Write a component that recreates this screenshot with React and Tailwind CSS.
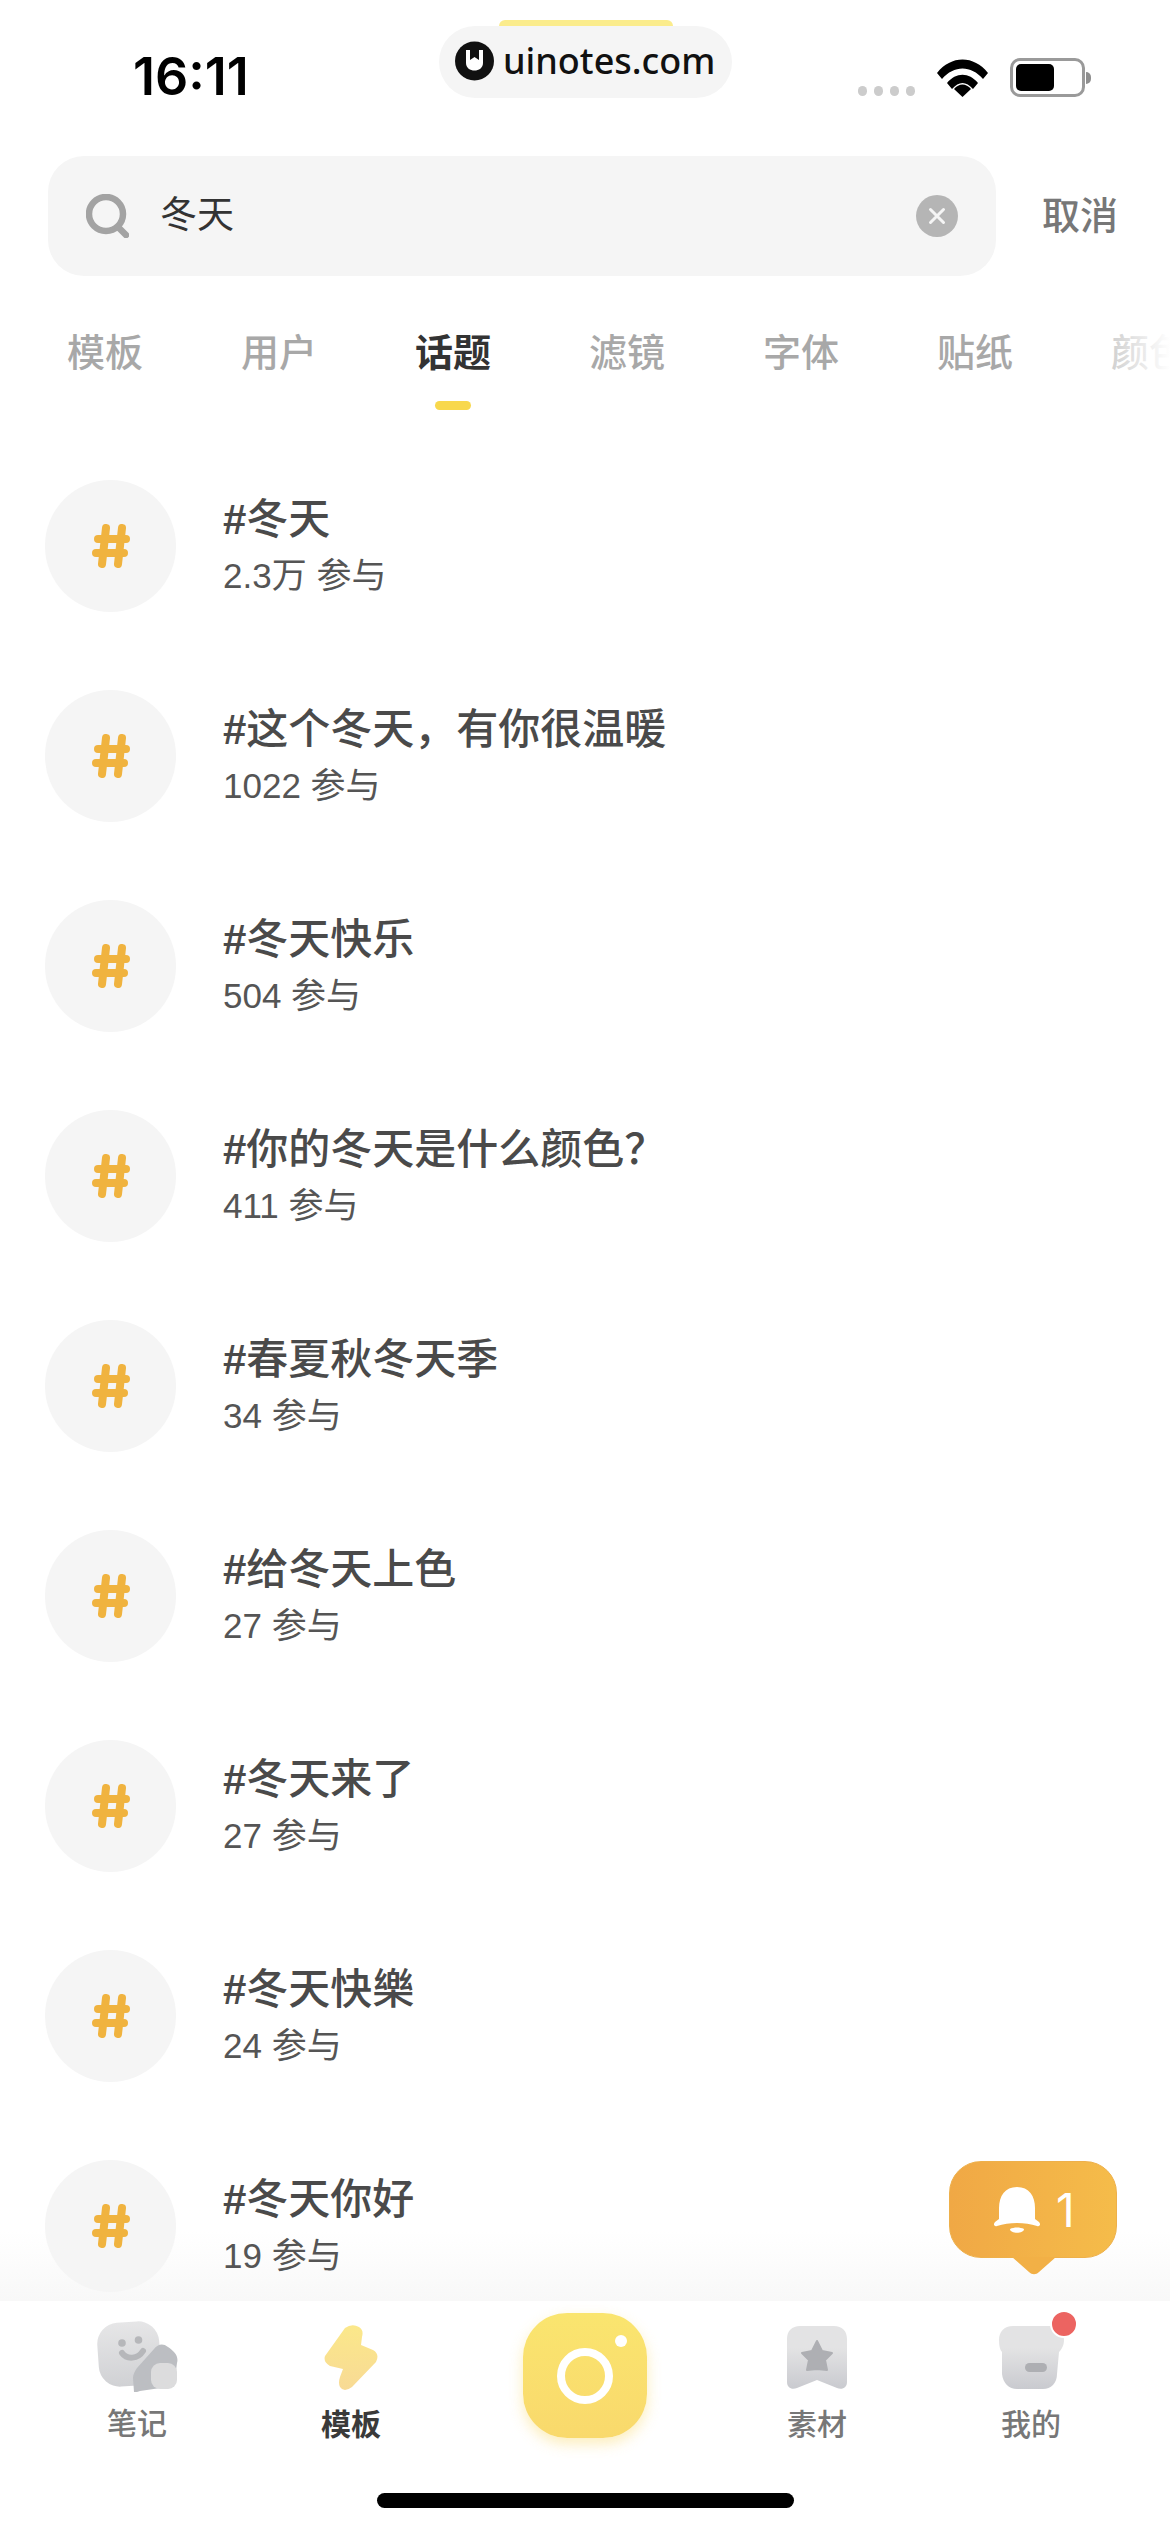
import React from 'react';

const FONT = "font-['Liberation_Sans','Noto_Sans_CJK_SC',sans-serif]";

const tabs = ['模板', '用户', '话题', '滤镜', '字体', '贴纸', '颜色'];

const topics = [
    { title: '冬天', count: '2.3万 参与' },
    { title: '这个冬天，有你很温暖', count: '1022 参与' },
    { title: '冬天快乐', count: '504 参与' },
    { title: '你的冬天是什么颜色？', count: '411 参与' },
    { title: '春夏秋冬天季', count: '34 参与' },
    { title: '给冬天上色', count: '27 参与' },
    { title: '冬天来了', count: '27 参与' },
    { title: '冬天快樂', count: '24 参与' },
    { title: '冬天你好', count: '19 参与' },
];

function HashIcon() {
    return (
        <svg width="38" height="44" viewBox="0 0 38 44" fill="none" stroke="#f0b33f" strokeWidth="8" strokeLinecap="round">
            <path d="M14 4 L10 40" />
            <path d="M30 4 L26 40" />
            <path d="M6 15 H34" />
            <path d="M4 29 H32" />
        </svg>
    );
}

function StatusBar() {
    return (
        <div className="flex h-[156px] items-start justify-between pl-[133px] pr-[79px]">
            <span className="mt-[48px] font-['Inter','Liberation_Sans',sans-serif] text-[52px] leading-[58px] font-semibold text-black">16:11</span>
            <div className="mt-[58px] flex items-end">
                <div className="mb-[1px] flex gap-[7px]">
                    <span className="h-[10px] w-[9px] rounded-full bg-[#cccccc]" />
                    <span className="h-[10px] w-[9px] rounded-full bg-[#cccccc]" />
                    <span className="h-[10px] w-[9px] rounded-full bg-[#cccccc]" />
                    <span className="h-[10px] w-[9px] rounded-full bg-[#cccccc]" />
                </div>
                <svg className="ml-[22px]" width="51" height="38" viewBox="0 0 51 38">
                    <path d="M0 14 C14 -4 37 -4 51 14 L46 20 C34 6 17 6 5 20 Z" fill="#000" />
                    <path d="M10 24 C19 13 32 13 41 24 L36 30 C29 22 22 22 15 30 Z" fill="#000" />
                    <path d="M17 30 C22 24 29 24 34 30 L25.500 38 Z" fill="#000" />
                </svg>
                <div className="ml-[22px] flex items-center">
                    <div className="flex h-[39px] w-[75px] items-center rounded-[10px] border-[3px] border-[#9a9a9a] pl-[3px]">
                        <div className="h-[27px] w-[38px] rounded-[5px] bg-black" />
                    </div>
                    <div className="ml-[1px] h-[12px] w-[5px] rounded-r-full bg-[#8f8f8f]" />
                </div>
            </div>
        </div>
    );
}

function Watermark() {
    return (
        <div className="absolute left-[439px] top-[20px] flex flex-col items-center">
            <div className="h-[6px] w-[174px] rounded-t-[10px] bg-[#fbec8c]" />
            <div className="flex h-[72px] w-[293px] items-center rounded-[36px] bg-[#f5f5f5] pb-[3px] pl-[16px]">
                <svg width="39" height="40" viewBox="0 0 39 40">
                    <circle cx="19.500" cy="20" r="19.500" fill="#111" />
                    <path d="M11 9 H15 V19 L19.500 16 L24 19 V9 H28 V22 C28 32 11 32 11 22 Z" fill="#fff" />
                </svg>
                <span className="ml-[9px] font-['Noto_Sans',sans-serif] text-[36px] leading-[44px] font-medium text-[#111]">uinotes.com</span>
            </div>
        </div>
    );
}

function SearchBar() {
    return (
        <div className="flex items-center pl-[48px]">
            <div className="flex h-[120px] w-[948px] items-center rounded-[36px] bg-[#f5f5f5] pl-[38px]">
                <svg width="43" height="44" viewBox="0 0 43 44" fill="none" stroke="#a3a3a3" strokeWidth="6.500" strokeLinecap="round">
                    <circle cx="20" cy="20" r="17" />
                    <path d="M32 33 L40 41" />
                </svg>
                <span className="ml-[31px] text-[37px] leading-[44px] text-[#333333]">冬天</span>
                <svg className="ml-auto mr-[38px]" width="42" height="42" viewBox="0 0 42 42">
                    <circle cx="21" cy="21" r="21" fill="#b5b5b5" />
                    <path d="M14.500 14.500 L27.500 27.500 M27.500 14.500 L14.500 27.500" stroke="#f5f5f5" strokeWidth="3" strokeLinecap="round" />
                </svg>
            </div>
            <span className="ml-[46px] text-[38px] leading-[44px] font-medium text-[#777777]">取消</span>
        </div>
    );
}

function Tabs() {
    return (
        <div className="relative mt-[54px] h-[81px] overflow-hidden pl-[67px]">
            <div className="flex gap-[98px]">
                {tabs.map((tab) => (
                    <div key={tab} className="flex w-[76px] shrink-0 flex-col items-center whitespace-nowrap">
                        <span className={tab === '话题' ? 'text-[38px] leading-[46px] font-bold text-[#333333]' : 'text-[38px] leading-[46px] font-medium text-[#a8a8a8]'}>{tab}</span>
                        {tab === '话题' && <span className="mt-[25px] h-[9px] w-[36px] rounded-full bg-[#f8d84d]" />}
                    </div>
                ))}
            </div>
            <div className="absolute right-0 top-0 h-full w-[110px] bg-gradient-to-r from-white/0 to-white" />
        </div>
    );
}

function TopicRow({ title, count }) {
    return (
        <div className="flex h-[132px] items-center">
            <div className="flex h-[132px] w-[131px] shrink-0 items-center justify-center rounded-full bg-[#f5f5f5]">
                <HashIcon />
            </div>
            <div className="ml-[47px] -mt-[2px]">
                <div className="text-[42px] leading-[52px] font-medium text-[#4a4a4a]"><span className="font-bold">#</span>{title}</div>
                <div className="mt-[9px] text-[35px] leading-[42px] text-[#555555]">{count}</div>
            </div>
        </div>
    );
}

function NotesIcon() {
    return (
        <svg width="82" height="73" viewBox="0 0 82 73">
            <defs>
                <linearGradient id="notesBody" x1="0" y1="0" x2="0" y2="1">
                    <stop offset="0" stopColor="#e6e6e7" />
                    <stop offset="1" stopColor="#d0d1d4" />
                </linearGradient>
            </defs>
            <rect x="2" y="2" width="62" height="64" rx="21" transform="rotate(-4 33 34)" fill="url(#notesBody)" />
            <circle cx="26" cy="23" r="3.800" fill="#b6b7ba" />
            <circle cx="42.500" cy="20" r="3.800" fill="#b6b7ba" />
            <path d="M26 33 C31 40 42 39 47 31" fill="none" stroke="#b6b7ba" strokeWidth="6" strokeLinecap="round" />
            <path d="M38 72 L37 58 C37 54 39 51 41 48 L58 29 C62 24 67 23 72 27 C78 31 83 36 81 43 L78 66 L44 71 C42 72 40 72 38 72 Z" fill="#bcbec2" />
            <rect x="55" y="43" width="26" height="26" rx="9" fill="#dcdcdd" />
        </svg>
    );
}

function BoltIcon() {
    return (
        <svg width="54" height="66" viewBox="0 0 54 66">
            <defs>
                <linearGradient id="boltFill" x1="0" y1="0" x2="0" y2="1">
                    <stop offset="0" stopColor="#fbe88a" />
                    <stop offset="1" stopColor="#f8da95" />
                </linearGradient>
            </defs>
            <path d="M21 3 Q28 -2 35 2 Q40 5 38 12 L37 20 L49 25 Q56 29 52 37 L28 62 Q20 68 16 62 Q14 58 16 52 L19 44 L6 41 Q-1 37 1 31 Z" fill="url(#boltFill)" />
        </svg>
    );
}

function CameraButton() {
    return (
        <div className="relative h-[125px] w-[124px] rounded-[44px] bg-gradient-to-b from-[#fae56f] to-[#f9d96c] shadow-[0_6px_14px_rgba(249,217,108,0.45)]">
            <div className="absolute left-[34px] top-[35px] h-[56px] w-[56px] rounded-full border-[8px] border-white" />
            <div className="absolute left-[92px] top-[22px] h-[12px] w-[12px] rounded-full bg-white" />
        </div>
    );
}

function BookmarkIcon() {
    return (
        <svg width="60" height="63" viewBox="0 0 60 63">
            <defs>
                <linearGradient id="bookmarkFill" x1="0" y1="0" x2="0" y2="1">
                    <stop offset="0.350" stopColor="#e3e3e4" />
                    <stop offset="1" stopColor="#c9cacf" />
                </linearGradient>
            </defs>
            <path d="M13 0 H47 C55 0 60 5 60 13 V56 C60 62 55 64 50 62 L30 54 L10 62 C5 64 0 62 0 56 V13 C0 5 5 0 13 0 Z" fill="url(#bookmarkFill)" />
            <path d="M30 15 L35 25 L45 27 L38 34 L40 44 L30 43 L20 44 L22 34 L15 27 L25 25 Z" fill="#aeafb3" stroke="#aeafb3" strokeWidth="2" strokeLinejoin="round" />
        </svg>
    );
}

function ProfileIcon() {
    return (
        <div className="relative h-[63px] w-[65px]">
            <svg width="65" height="63" viewBox="0 0 65 63">
                <defs>
                    <linearGradient id="profileFill" x1="0" y1="0" x2="0" y2="1">
                        <stop offset="0.350" stopColor="#e3e3e4" />
                        <stop offset="1" stopColor="#c9cacf" />
                    </linearGradient>
                </defs>
                <path d="M14 0 H51 C60 0 65 6 65 14 C65 20 62 24 60 26 L58 48 C58 57 52 63 44 63 H18 C10 63 4 57 3 48 L3 26 C1 24 0 20 0 14 C0 6 5 0 14 0 Z" fill="url(#profileFill)" />
                <rect x="26" y="37" width="22" height="9" rx="4.500" fill="#aeafb3" />
            </svg>
            <span className="absolute left-[51px] top-[-16px] h-[28px] w-[28px] rounded-full border-[2px] border-white bg-[#ec6461]" />
        </div>
    );
}

function BellBubble() {
    return (
        <div className="absolute left-[949px] top-[2161px]">
            <div className="flex h-[97px] w-[168px] items-center rounded-[32px] border border-[#eeb04a] bg-gradient-to-r from-[#f0a845] to-[#f5bc4a] pl-[43px]">
                <svg width="48" height="48" viewBox="0 0 48 48" fill="#fff">
                    <path d="M24 1 C36 1 42 10 42 22 V33 L46 36 C48 38 47 41 44 40 C32 36 16 36 4 40 C1 41 0 38 2 36 L6 33 V22 C6 10 12 1 24 1 Z" />
                    <path d="M17 43 C21 41 27 41 31 43 C31 48 17 48 17 43 Z" />
                </svg>
                <span className="ml-[15px] font-['Inter','Liberation_Sans',sans-serif] text-[46px] leading-[48px] text-white">1</span>
            </div>
            <svg className="-mt-[1px] ml-[63px] block" width="44" height="18" viewBox="0 0 44 18">
                <path d="M0 0 H44 L27 15 C24 18 20 18 17 15 Z" fill="#f2b046" />
            </svg>
        </div>
    );
}

function NavLabel({ active, children }) {
    return <span className={active ? 'text-[30px] leading-[36px] font-bold text-[#3a3a3a]' : 'text-[30px] leading-[36px] font-medium text-[#777777]'}>{children}</span>;
}

function NavItem({ pad, label, active, children }) {
    return (
        <div className={`flex flex-col items-center ${pad}`}>
            {children}
            <NavLabel active={active}>{label}</NavLabel>
        </div>
    );
}

function BottomNav() {
    return (
        <div className="relative h-[231px] bg-white">
            <div className="grid h-[192px] grid-cols-[274px_154px_314px_150px_278px]">
                <NavItem pad="pt-[19px] gap-[13px]" label="笔记"><NotesIcon /></NavItem>
                <NavItem pad="pt-[24px] gap-[16px]" label="模板" active><BoltIcon /></NavItem>
                <div className="flex justify-center pt-[12px]">
                    <CameraButton />
                </div>
                <NavItem pad="pt-[25px] gap-[18px]" label="素材"><BookmarkIcon /></NavItem>
                <NavItem pad="pt-[25px] gap-[18px]" label="我的"><ProfileIcon /></NavItem>
            </div>
            <div className="mx-auto h-[15px] w-[417px] rounded-full bg-black" />
        </div>
    );
}

export default function App() {
    return (
        <div className={`${FONT} relative flex h-[2532px] w-[1170px] flex-col overflow-hidden bg-white`}>
            <StatusBar />
            <SearchBar />
            <Tabs />
            <div className="relative flex-1 overflow-hidden pl-[45px] pt-[69px]">
                <div className="absolute bottom-0 left-0 h-[70px] w-full bg-gradient-to-b from-white/0 to-[#f8f8f8]" />
                <div className="relative flex flex-col gap-[78px]">
                    {topics.map((topic) => (
                        <TopicRow key={topic.title} title={topic.title} count={topic.count} />
                    ))}
                </div>
            </div>
            <BottomNav />
            <Watermark />
            <BellBubble />
        </div>
    );
}
